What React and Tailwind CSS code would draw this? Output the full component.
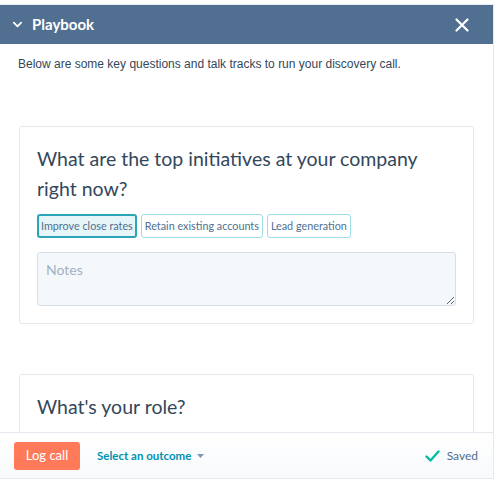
import React from "react";

const Chevron = () => (
  <svg width="11" height="11" viewBox="0 0 12 12" fill="none">
    <path d="M2 4l4 4 4-4" stroke="white" strokeWidth="2" strokeLinecap="round" strokeLinejoin="round" />
  </svg>
);

const CloseIcon = () => (
  <svg width="14" height="14" viewBox="0 0 14 14" fill="none">
    <path d="M1.5 1.5l11 11M12.5 1.5l-11 11" stroke="white" strokeWidth="2.2" strokeLinecap="round" />
  </svg>
);

const Check = () => (
  <svg width="15" height="12" viewBox="0 0 15 12" fill="none">
    <path d="M1.5 6.5l4 4L13.5 1.5" stroke="#00bda5" strokeWidth="2.4" strokeLinecap="round" strokeLinejoin="round" />
  </svg>
);

const QuestionCard = ({ title, chips, showNotes }) => (
  <div className="mx-[19px] rounded-[3px] border border-[#e5e8ee] bg-white px-[17px] pt-[17px] pb-[17px]">
    <h3 className="text-[19.5px] leading-[30px] text-[#33475b]">{title}</h3>
    {chips && (
      <div className="mt-[10px] flex gap-[4px]">
        {chips.map((chip, index) => (
          <span
            key={index}
            className={`flex h-[24px] items-center rounded-[3px] text-[10.8px] text-[#516f90] ${
              index === 0
                ? "border-2 border-[#2aa6b8] bg-[#e5f5f8] px-[2px]"
                : "border border-[#9fdde6] bg-white px-[3px]"
            }`}
          >
            {chip}
          </span>
        ))}
      </div>
    )}
    {showNotes && (
      <textarea
        placeholder="Notes"
        className="mt-[14px] block h-[54px] w-full resize-y rounded-[3px] border border-[#d6dfe8] bg-[#f5f8fa] px-[8px] py-[6px] text-[14px] text-[#33475b] placeholder-[#9fb1c3] outline-none"
      />
    )}
  </div>
);

export default function App() {
  return (
    <div className="h-[488px] w-[500px] bg-white pt-[4px]" style={{ fontFamily: "Lato, 'Open Sans', sans-serif" }}>
      <div className="flex h-[475px] w-[494px] flex-col border-t border-r border-[#e5e8ee]">
        {/* Header */}
        <div className="flex h-[39px] shrink-0 items-center justify-between bg-[#516f90] pl-[12px] pr-[24px]">
          <div className="flex items-center gap-[9px]">
            <Chevron />
            <span className="text-[15px] font-bold text-white">Playbook</span>
          </div>
          <CloseIcon />
        </div>

        {/* Scrolling content */}
        <div className="flex-1 overflow-hidden">
          <p
            className="px-[18px] pt-[10px] text-[12px] leading-5 text-[#33475b]"
            style={{ fontFamily: "'Liberation Sans', Arial, sans-serif" }}
          >
            Below are some key questions and talk tracks to run your discovery call.
          </p>
          <div className="mt-[52px]">
            <QuestionCard
              title="What are the top initiatives at your company right now?"
              chips={["Improve close rates", "Retain existing accounts", "Lead generation"]}
              showNotes
            />
          </div>
          <div className="mt-[50px]">
            <QuestionCard title="What's your role?" />
          </div>
        </div>

        {/* Footer */}
        <div className="flex h-[47px] shrink-0 items-center border-t border-b border-[#e5e8ee] bg-gradient-to-b from-white to-[#f7f9fb] pl-[14px] pr-[15px]">
          <button className="h-[28px] w-[66px] rounded-[3px] bg-[#ff7a59] text-[13px] text-white">Log call</button>
          <button className="ml-[17px] flex items-center gap-[6px] text-[11.5px] font-bold text-[#0091ae]">
            Select an outcome
            <svg width="7" height="4" viewBox="0 0 7 4">
              <path d="M0 0h7L3.5 4z" fill="#7c98b6" />
            </svg>
          </button>
          <div className="ml-auto flex items-center gap-[7px]">
            <Check />
            <span className="text-[12px] text-[#516f90]">Saved</span>
          </div>
        </div>
      </div>
    </div>
  );
}
